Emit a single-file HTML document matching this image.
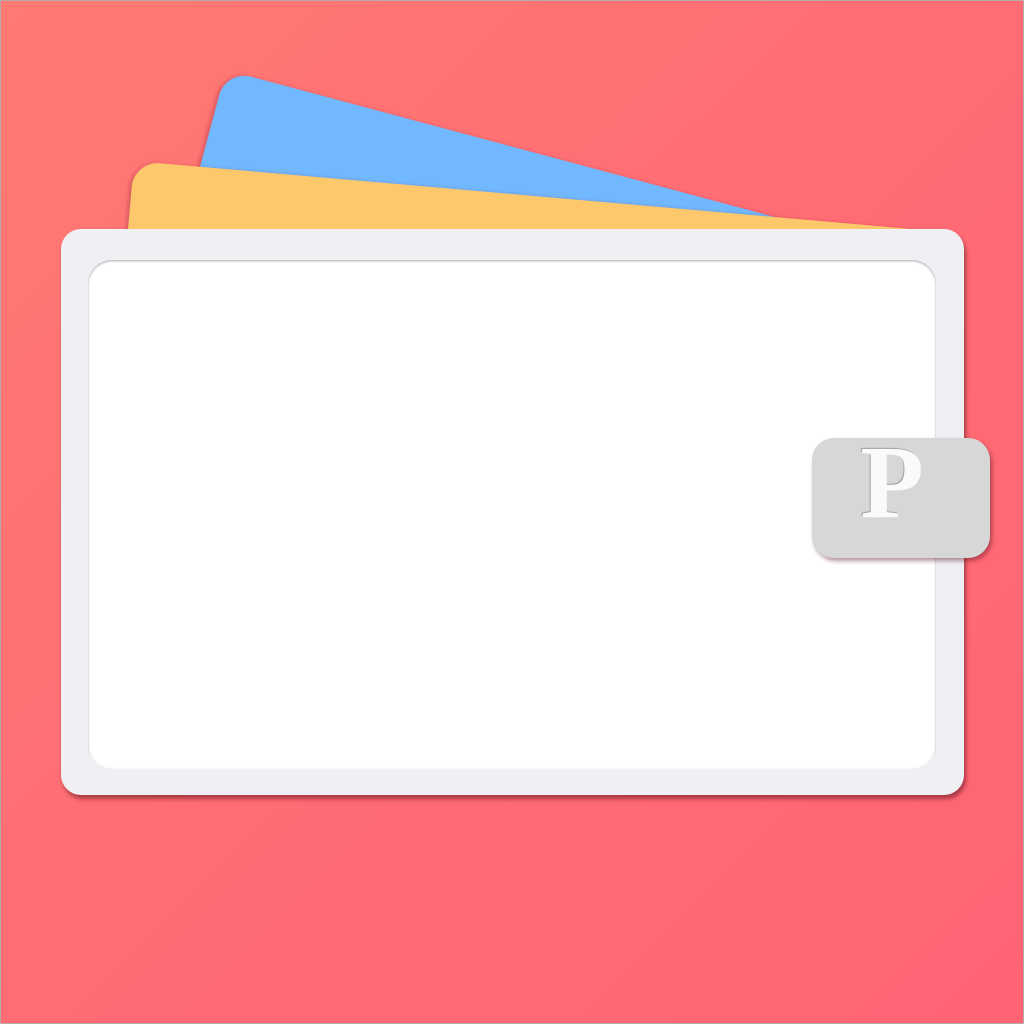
<!DOCTYPE html>
<html><head><style>
html,body{margin:0;padding:0;width:1024px;height:1024px;overflow:hidden}
body{background:linear-gradient(135deg,#ff7a72 0%,#ff6c74 50%,#ff6474 100%);position:relative;box-shadow:inset 0 0 0 1px #b9a9a9}
.wallet{position:absolute;left:61px;top:229px;width:903px;height:566px;background:#efeff4;border-radius:20px;box-shadow:2px 4px 4px rgba(100,20,30,.55)}
.inner{position:absolute;left:88px;top:260px;width:848px;height:509px;background:#fff;border-radius:24px;box-shadow:inset 0 1px 2px rgba(0,0,0,.35)}
.tab{position:absolute;left:812px;top:438px;width:178px;height:120px;background:#d7d7d7;border-radius:22px;box-shadow:2px 3px 4px rgba(90,20,30,.45)}
.p{position:absolute;left:850px;top:428px;width:84px;text-align:center;font:bold 104px "Liberation Serif",serif;color:#fafafa;line-height:110px;text-shadow:-1px -1px 1px rgba(0,0,0,.25)}
</style></head><body>
<svg width="1024" height="1024" style="position:absolute;left:0;top:0">
<defs><filter id="s" x="-10%" y="-10%" width="120%" height="120%"><feDropShadow dx="-2" dy="1" stdDeviation="2" flood-color="#802030" flood-opacity=".35"/></filter></defs>
<rect x="0" y="0" width="640" height="400" rx="26" fill="#71b8fe" filter="url(#s)" transform="translate(226,70) rotate(15)"/>
<rect x="0" y="0" width="800" height="300" rx="26" fill="#fdc86c" filter="url(#s)" transform="translate(134,161) rotate(5)"/>
</svg>
<div class="wallet"></div>
<div class="inner"></div>
<div class="tab"></div>
<div class="p">P</div>
</body></html>
